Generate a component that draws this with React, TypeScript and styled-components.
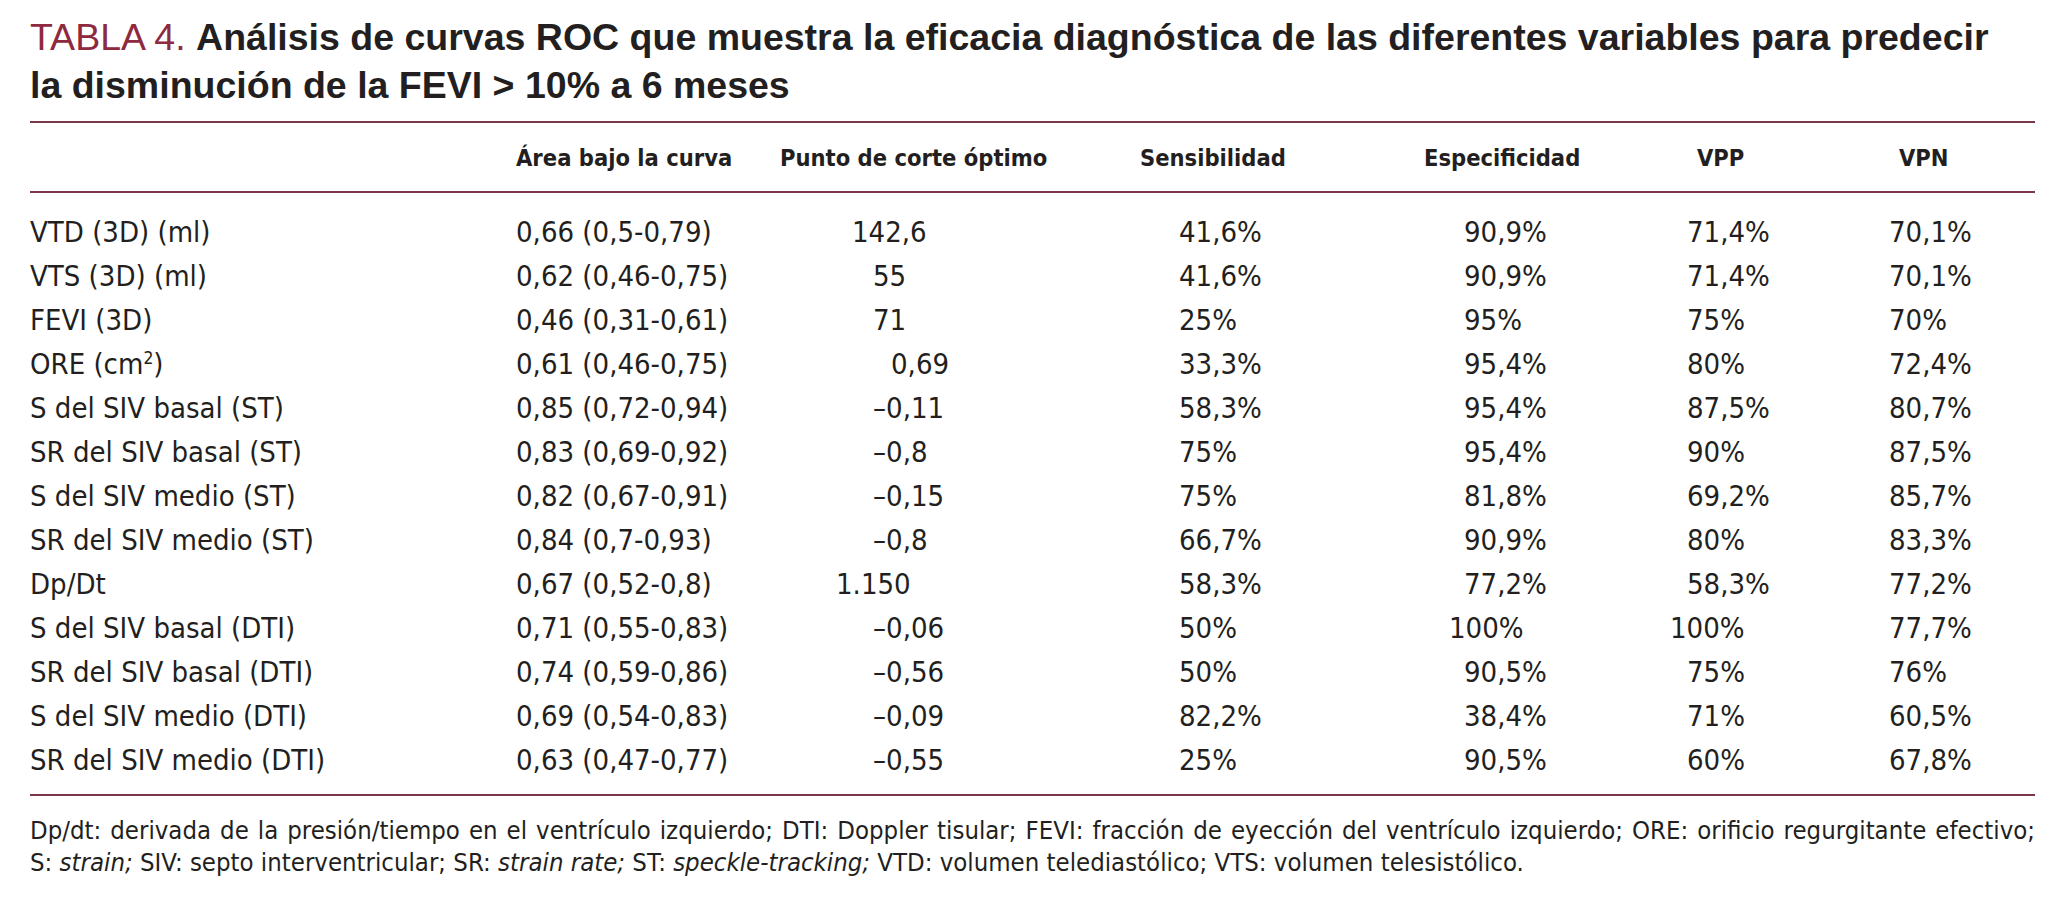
import React from "react";
import styled, { createGlobalStyle } from "styled-components";

const NARROW = `"DejaVu Sans Condensed", "Liberation Sans Narrow", "Arial Narrow", sans-serif`;

const GlobalStyle = createGlobalStyle`
  html, body {
    margin: 0;
    padding: 0;
    background: #ffffff;
  }
  body {
    font-family: "Liberation Sans", Arial, sans-serif;
    color: #231f20;
  }
`;

type Cell = string | [string, number];

const columns = [
  { title: "", head: 0, cell: 0 },
  { title: "Área bajo la curva", head: 3, cell: 3 },
  { title: "Punto de corte óptimo", head: 4, cell: 97 },
  { title: "Sensibilidad", head: 4, cell: 43 },
  { title: "Especificidad", head: 4, cell: 44 },
  { title: "VPP", head: 30, cell: 20 },
  { title: "VPN", head: 14, cell: 4 },
];

const rows: { label: React.ReactNode; values: Cell[] }[] = [
  { label: "VTD (3D) (ml)", values: ["0,66 (0,5-0,79)", ["142,6", 76], "41,6%", "90,9%", "71,4%", "70,1%"] },
  { label: "VTS (3D) (ml)", values: ["0,62 (0,46-0,75)", "55", "41,6%", "90,9%", "71,4%", "70,1%"] },
  { label: "FEVI (3D)", values: ["0,46 (0,31-0,61)", "71", "25%", "95%", "75%", "70%"] },
  {
    label: (
      <>
        ORE (cm<sup>2</sup>)
      </>
    ),
    values: ["0,61 (0,46-0,75)", ["0,69", 115], "33,3%", "95,4%", "80%", "72,4%"],
  },
  { label: "S del SIV basal (ST)", values: ["0,85 (0,72-0,94)", "–0,11", "58,3%", "95,4%", "87,5%", "80,7%"] },
  { label: "SR del SIV basal (ST)", values: ["0,83 (0,69-0,92)", "–0,8", "75%", "95,4%", "90%", "87,5%"] },
  { label: "S del SIV medio (ST)", values: ["0,82 (0,67-0,91)", "–0,15", "75%", "81,8%", "69,2%", "85,7%"] },
  { label: "SR del SIV medio (ST)", values: ["0,84 (0,7-0,93)", "–0,8", "66,7%", "90,9%", "80%", "83,3%"] },
  { label: "Dp/Dt", values: ["0,67 (0,52-0,8)", ["1.150", 60], "58,3%", "77,2%", "58,3%", "77,2%"] },
  { label: "S del SIV basal (DTI)", values: ["0,71 (0,55-0,83)", "–0,06", "50%", ["100%", 29], ["100%", 3], "77,7%"] },
  { label: "SR del SIV basal (DTI)", values: ["0,74 (0,59-0,86)", "–0,56", "50%", "90,5%", "75%", "76%"] },
  { label: "S del SIV medio (DTI)", values: ["0,69 (0,54-0,83)", "–0,09", "82,2%", "38,4%", "71%", "60,5%"] },
  { label: "SR del SIV medio (DTI)", values: ["0,63 (0,47-0,77)", "–0,55", "25%", "90,5%", "60%", "67,8%"] },
];

const App = () => {
  return (
    <>
      <GlobalStyle />
      <Page>
        <Title>
          <TableNo>TABLA 4. </TableNo>
          Análisis de curvas ROC que muestra la eficacia diagnóstica de las
          diferentes variables para predecir
          <br />
          la disminución de la FEVI &gt; 10% a 6 meses
        </Title>

        <Rule $gap={12} />
        <HeadRow>
          {columns.map((c, i) => (
            <HeadCell key={i} $indent={c.head}>
              {c.title}
            </HeadCell>
          ))}
        </HeadRow>
        <Rule $gap={0} />

        <Body>
          {rows.map((r, i) => (
            <DataRow key={i}>
              <DataCell $indent={0}>{r.label}</DataCell>
              {r.values.map((v, j) => {
                const text = Array.isArray(v) ? v[0] : v;
                const indent = Array.isArray(v) ? v[1] : columns[j + 1].cell;
                return (
                  <DataCell key={j} $indent={indent}>
                    {text}
                  </DataCell>
                );
              })}
            </DataRow>
          ))}
        </Body>
        <Rule $gap={0} />

        <Notes>
          <NoteLine $justify>
            Dp/dt: derivada de la presión/tiempo en el ventrículo izquierdo; DTI:
            Doppler tisular; FEVI: fracción de eyección del ventrículo izquierdo;
            ORE: orificio regurgitante efectivo;
          </NoteLine>
          <NoteLine>
            S: <em>strain;</em> SIV: septo interventricular; SR: <em>strain rate;</em>{" "}
            ST: <em>speckle-tracking;</em> VTD: volumen telediastólico; VTS:
            volumen telesistólico.
          </NoteLine>
        </Notes>
      </Page>
    </>
  );
};

export default App;

const Page = styled.div`
  width: 2005px;
  padding: 13px 0 20px 30px;
`;

const Title = styled.h1`
  margin: 0;
  font-family: "Liberation Sans", Arial, sans-serif;
  font-size: 37.5px;
  line-height: 48px;
  font-weight: 700;
  color: #231f20;
  white-space: nowrap;
`;

const TableNo = styled.span`
  font-weight: 400;
  color: #8e2a3f;
`;

const Rule = styled.div<{ $gap: number }>`
  margin-top: ${(p) => p.$gap}px;
  height: 2px;
  background-color: #7b3649;
`;

const GRID = `483px 263px 360px 284px 247px 218px 150px`;

const HeadRow = styled.div`
  display: grid;
  grid-template-columns: ${GRID};
  align-items: center;
  height: 68px;
  padding-top: 2px;
  box-sizing: border-box;
`;

const HeadCell = styled.div<{ $indent: number }>`
  padding-left: ${(p) => p.$indent}px;
  font-family: ${NARROW};
  font-weight: 700;
  font-size: 23.5px;
  line-height: 30px;
  color: #231f20;
  white-space: nowrap;
`;

const Body = styled.div`
  padding: 17px 0 12px;
`;

const DataRow = styled.div`
  display: grid;
  grid-template-columns: ${GRID};
  align-items: center;
  height: 44px;
`;

const DataCell = styled.div<{ $indent: number }>`
  padding-left: ${(p) => p.$indent}px;
  font-family: ${NARROW};
  font-size: 29px;
  line-height: 36px;
  color: #231f20;
  white-space: nowrap;

  sup {
    font-size: 0.6em;
    line-height: 0;
    vertical-align: 0.6em;
  }
`;

const Notes = styled.div`
  margin-top: 18px;
`;

const NoteLine = styled.p<{ $justify?: boolean }>`
  margin: 0;
  font-family: ${NARROW};
  font-size: 25.5px;
  line-height: 32px;
  color: #231f20;
  text-align: ${(p) => (p.$justify ? "justify" : "left")};
  text-align-last: ${(p) => (p.$justify ? "justify" : "auto")};

  em {
    font-style: italic;
  }
`;
